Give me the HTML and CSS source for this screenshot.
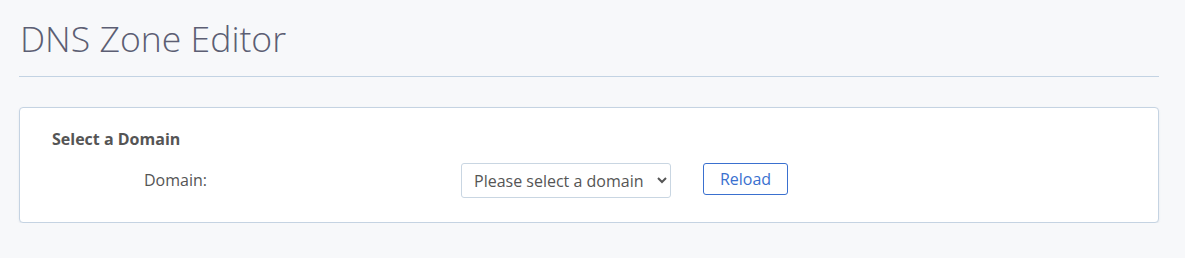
FILE: index.html
```html
<!DOCTYPE html>
<html>
<head>
<meta charset="utf-8">
<link rel="stylesheet" href="styles.css">
</head>
<body>
<div class="page">
  <h1 class="title">DNS Zone Editor</h1>
  <hr class="rule">
  <section class="card">
    <h2 class="card-title">Select a Domain</h2>
    <div class="row">
      <label class="label" for="domain">Domain:</label>
      <select id="domain" class="select">
        <option>Please select a domain</option>
      </select>
      <button class="btn">Reload</button>
    </div>
  </section>
</div>
</body>
</html>
```
FILE: styles.css
```css
html, body {
  margin: 0;
  padding: 0;
  background: #f7f8fa;
  font-family: "Open Sans", "Liberation Sans", sans-serif;
  color: #555;
}
.page {
  padding: 12px 26px 0 19px;
}
.title {
  margin: 0;
  padding-left: 1px;
  font-size: 35.6px;
  font-weight: 300;
  line-height: 52px;
  color: #5c5e73;
}
.rule {
  margin: 12px 0 30px;
  border: 0;
  border-top: 1px solid #c3d3e3;
}
.card {
  background: #fff;
  border: 1px solid #c5d3e2;
  border-radius: 4px;
  box-shadow: 0 1px 2px rgba(120, 140, 170, 0.15);
  padding: 20px 32px 24px 32px;
}
.card-title {
  margin: 0 0 13px;
  font-size: 16px;
  font-weight: 700;
  line-height: 22px;
  color: #555;
}
.row {
  display: flex;
  align-items: flex-start;
}
.label {
  width: 66px;
  margin-left: 92px;
  margin-right: 251px;
  font-size: 16px;
  line-height: 35px;
  color: #555;
}
.select {
  width: 210px;
  height: 35px;
  font-family: "Open Sans", "Liberation Sans", sans-serif;
  font-size: 16px;
  color: #555;
  background: #fff;
  border: 1px solid #c9d6e2;
  border-radius: 3px;
  padding: 0 6px 0 8px;
}
.btn {
  margin-left: 32px;
  width: 85px;
  height: 32px;
  padding: 0;
  font-family: "Open Sans", "Liberation Sans", sans-serif;
  font-size: 16px;
  color: #3a70cf;
  background: #fff;
  border: 1px solid #3a70cf;
  border-radius: 3px;
  cursor: pointer;
}
```
